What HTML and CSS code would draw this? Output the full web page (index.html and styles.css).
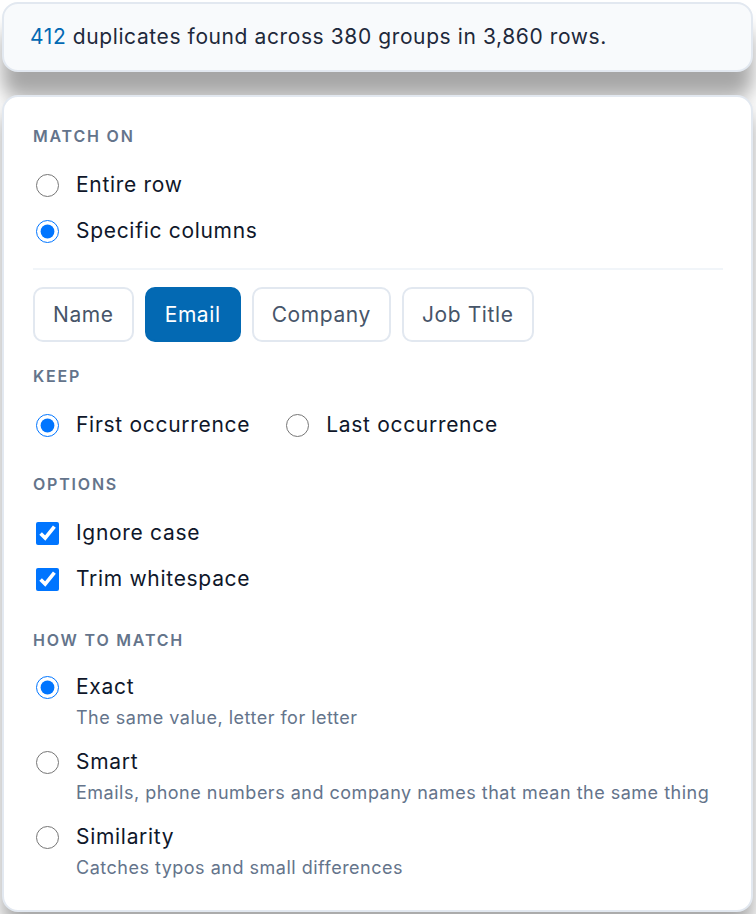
FILE: index.html
```html
<!DOCTYPE html>
<html lang="en">
<head>
  <meta charset="UTF-8">
  <meta name="viewport" content="width=device-width, initial-scale=1.0">
  <title>Remove duplicates</title>
  <link rel="stylesheet" href="styles.css">
</head>
<body>
  <div class="summary">
    <span class="count">412</span> duplicates found across 380 groups in 3,860 rows.
  </div>

  <div class="panel">
    <div class="label">Match on</div>
    <div class="stack">
      <label class="choice"><input type="radio" name="match"> Entire row</label>
      <label class="choice"><input type="radio" name="match" checked> Specific columns</label>
    </div>

    <hr class="divider">

    <div class="chips">
      <button class="chip">Name</button>
      <button class="chip active">Email</button>
      <button class="chip">Company</button>
      <button class="chip">Job Title</button>
    </div>

    <div class="label">Keep</div>
    <div class="row">
      <label class="choice"><input type="radio" name="keep" checked> First occurrence</label>
      <label class="choice"><input type="radio" name="keep"> Last occurrence</label>
    </div>

    <div class="label">Options</div>
    <div class="stack options">
      <label class="choice"><input type="checkbox" checked> Ignore case</label>
      <label class="choice"><input type="checkbox" checked> Trim whitespace</label>
    </div>

    <div class="label">How to match</div>
    <div class="methods">
      <label class="method">
        <input type="radio" name="how" checked>
        <span>
          <span class="name">Exact</span>
          <span class="hint">The same value, letter for letter</span>
        </span>
      </label>
      <label class="method">
        <input type="radio" name="how">
        <span>
          <span class="name">Smart</span>
          <span class="hint">Emails, phone numbers and company names that mean the same thing</span>
        </span>
      </label>
      <label class="method">
        <input type="radio" name="how">
        <span>
          <span class="name">Similarity</span>
          <span class="hint">Catches typos and small differences</span>
        </span>
      </label>
    </div>
  </div>
</body>
</html>
```

FILE: styles.css
```css
body {
  font-family: Inter, "Noto Sans", sans-serif;
  background: #fff;
  color: #0f172a;
  margin: 0;
  padding: 2px 3px 3px 2px;
}
.summary {
  background: #f8fafc;
  border: 2px solid #e2e8f0;
  border-radius: 16px;
  padding: 20px 26px;
  font-size: 21px;
  letter-spacing: 0.6px;
  line-height: 26px;
  color: #1e293b;
  box-shadow: 0 26px 20px rgba(0, 0, 0, 0.35);
}
.count {
  color: #0369b3;
}
.panel {
  margin-top: 23px;
  background: #fff;
  border: 2px solid #e2e8f0;
  border-radius: 16px;
  padding: 29px 28px 29px 29px;
  box-shadow: 0 16px 20px rgba(0, 0, 0, 0.35);
}
.label {
  font-size: 16px;
  font-weight: 600;
  letter-spacing: 1.8px;
  text-transform: uppercase;
  color: #64748b;
  line-height: 20px;
  margin-bottom: 25px;
}
.stack {
  display: flex;
  flex-direction: column;
  gap: 18px;
  margin-bottom: 36px;
}
.stack.options {
  margin-bottom: 37px;
}
.row {
  display: flex;
  gap: 33px;
  margin-bottom: 35px;
}
.choice {
  display: flex;
  align-items: center;
  gap: 17px;
  font-size: 21px;
  letter-spacing: 0.7px;
  line-height: 28px;
}
input[type="radio"],
input[type="checkbox"] {
  width: 23px;
  height: 23px;
  margin: 0 0 0 3px;
  flex-shrink: 0;
}
.divider {
  border: 0;
  border-top: 2px solid #f1f5f9;
  margin: -13px 0 17px;
}
.chips {
  display: flex;
  gap: 11px;
  margin-bottom: 24px;
}
.chip {
  font-family: inherit;
  font-size: 21px;
  letter-spacing: 0.6px;
  color: #475569;
  background: #fff;
  border: 2px solid #e2e8f0;
  border-radius: 10px;
  padding: 13px 18px;
  line-height: 25px;
}
.chip.active {
  background: #0369b3;
  border-color: #0369b3;
  color: #fff;
}
.methods {
  display: flex;
  flex-direction: column;
  gap: 17px;
  margin-top: -2px;
}
.method {
  display: flex;
  align-items: flex-start;
  gap: 17px;
}
.method input {
  margin-top: 3px;
}
.method > span {
  display: flex;
  flex-direction: column;
  gap: 4px;
}
.name {
  font-size: 21px;
  letter-spacing: 0.7px;
  line-height: 28px;
}
.hint {
  font-size: 18px;
  letter-spacing: 0.5px;
  line-height: 26px;
  color: #64748b;
}
```
